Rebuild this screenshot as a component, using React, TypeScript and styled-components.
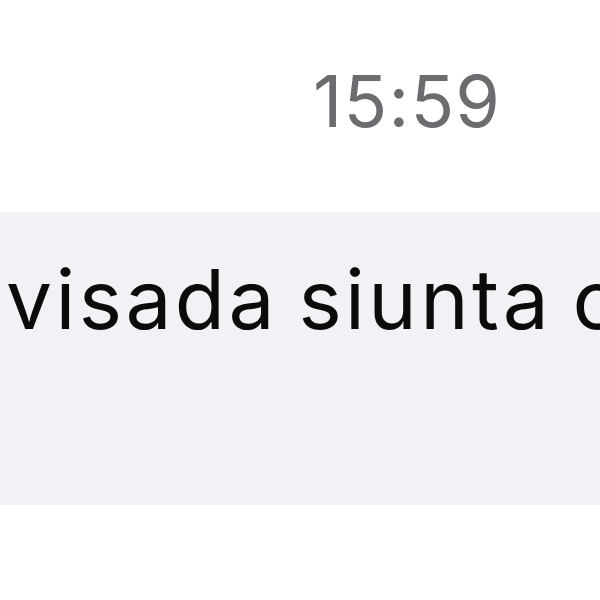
import React from "react";
import styled, { createGlobalStyle } from "styled-components";

const Global = createGlobalStyle`
  html, body { margin: 0; padding: 0; background: #ffffff; }
  body { width: 600px; height: 600px; overflow: hidden; font-family: Inter, "Noto Sans", sans-serif; }
`;

const Screen = styled.div`
  width: 600px;
  height: 600px;
  display: flex;
  flex-direction: column;
  background: #ffffff;
  overflow: hidden;
`;

const TimeRow = styled.div`
  height: 212px;
  display: flex;
  align-items: flex-start;
  padding-left: 313px;
  box-sizing: border-box;
`;

const Time = styled.span`
  margin-top: 59px;
  font-size: 72px;
  line-height: 84px;
  color: #6c6c70;
  font-weight: 400;
  letter-spacing: 1.2px;
`;

const Bubble = styled.div`
  height: 293px;
  background: #f0f2f5;
  display: flex;
  align-items: flex-start;
  padding-left: 6px;
  box-sizing: border-box;
  overflow: hidden;
`;

const MessageText = styled.span`
  margin-top: 38px;
  font-size: 82px;
  line-height: 100px;
  color: #0b0b0c;
  white-space: nowrap;
  font-weight: 400;
  letter-spacing: 3.4px;
  word-spacing: -6px;
`;

export default function App() {
  return (
    <>
      <Global />
      <Screen>
        <TimeRow>
          <Time>15:59</Time>
        </TimeRow>
        <Bubble>
          <MessageText>visada siunta cia</MessageText>
        </Bubble>
      </Screen>
    </>
  );
}
